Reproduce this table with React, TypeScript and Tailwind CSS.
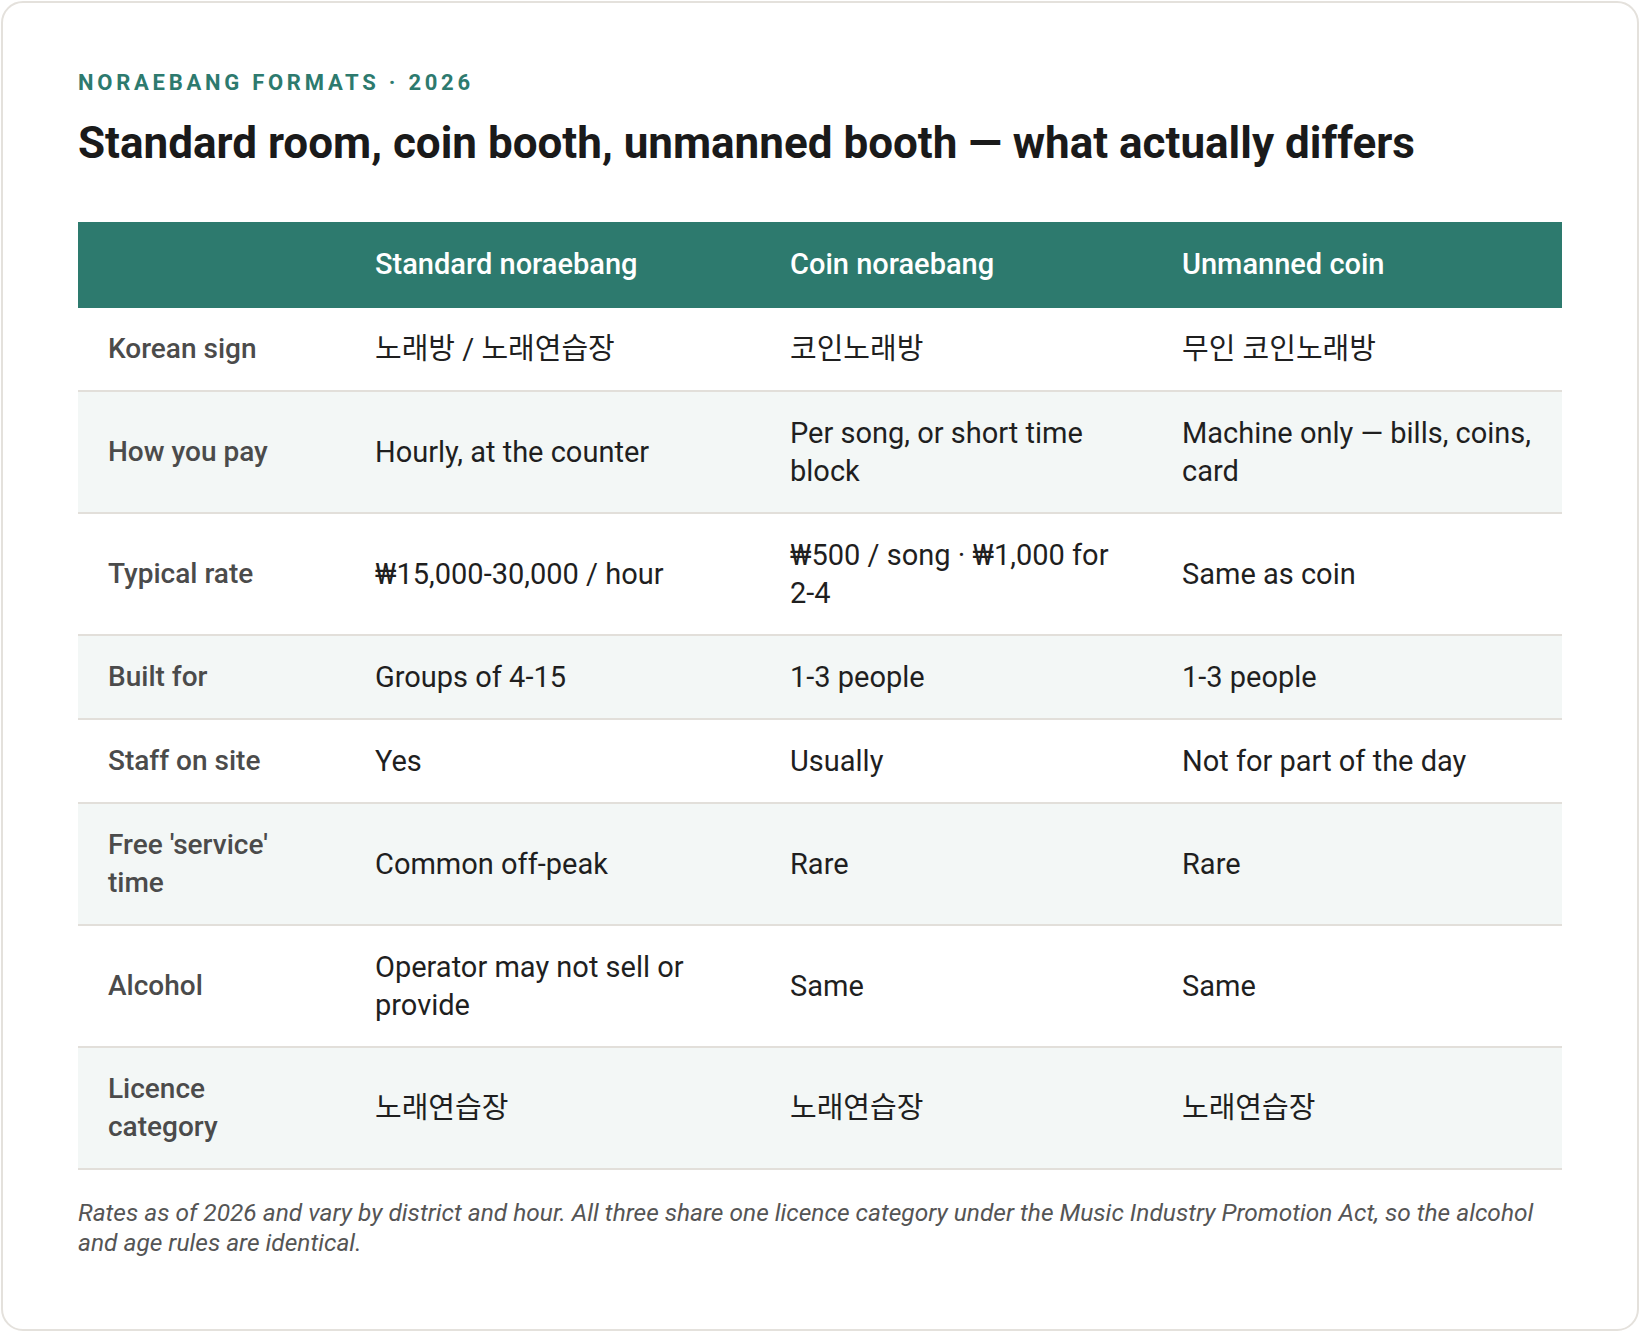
const rows: { label: string; cells: string[] }[] = [
  { label: 'Korean sign', cells: ['노래방 / 노래연습장', '코인노래방', '무인 코인노래방'] },
  { label: 'How you pay', cells: ['Hourly, at the counter', 'Per song, or short time block', 'Machine only — bills, coins, card'] },
  { label: 'Typical rate', cells: ['₩15,000-30,000 / hour', '₩500 / song · ₩1,000 for 2-4', 'Same as coin'] },
  { label: 'Built for', cells: ['Groups of 4-15', '1-3 people', '1-3 people'] },
  { label: 'Staff on site', cells: ['Yes', 'Usually', 'Not for part of the day'] },
  { label: "Free 'service' time", cells: ['Common off-peak', 'Rare', 'Rare'] },
  { label: 'Alcohol', cells: ['Operator may not sell or provide', 'Same', 'Same'] },
  { label: 'Licence category', cells: ['노래연습장', '노래연습장', '노래연습장'] },
]

export default function App() {
  return (
    <div className="min-h-screen bg-white p-px font-['Roboto','Noto_Sans_CJK_KR',sans-serif]">
      <div className="rounded-[22px] border-2 border-[#e4e1dc] bg-white px-[75px] pt-[65px] pb-[60px] min-h-[1330px]">
        <p className="text-[22px] font-bold tracking-[0.17em] text-[#2d7a6e] leading-[30px]">
          NORAEBANG FORMATS · 2026
        </p>
        <h1 className="mt-[17px] text-[44px] font-bold leading-[56px] text-[#1a1a1a]">
          Standard room, coin booth, unmanned booth — what actually differs
        </h1>

        <table className="mt-[51px] w-[1484px] table-fixed border-collapse">
          <colgroup>
            <col className="w-[267px]" />
            <col className="w-[415px]" />
            <col className="w-[392px]" />
            <col className="w-[410px]" />
          </colgroup>
          <thead>
            <tr className="bg-[#2d7a6e] text-white">
              <th className="h-[86px] px-[30px]" />
              <th className="px-[30px] text-left text-[29px] font-medium">Standard noraebang</th>
              <th className="px-[30px] text-left text-[29px] font-medium">Coin noraebang</th>
              <th className="px-[30px] text-left text-[29px] font-medium">Unmanned coin</th>
            </tr>
          </thead>
          <tbody>
            {rows.map((r, i) => (
              <tr key={r.label} className={`border-b-2 border-[#e2dfda] ${i % 2 === 1 ? 'bg-[#f3f7f6]' : 'bg-white'}`}>
                <td className="px-[30px] py-[22px] text-[28px] leading-[38px] font-medium text-[#4b4b4b] align-middle">
                  {r.label}
                </td>
                {r.cells.map((c, j) => (
                  <td key={j} className="px-[30px] py-[22px] text-[29px] leading-[38px] text-[#1f1f1f] align-middle">
                    {c}
                  </td>
                ))}
              </tr>
            ))}
          </tbody>
        </table>

        <p className="mt-[28px] text-[24.5px] italic leading-[30px] text-[#555555]">
          Rates as of 2026 and vary by district and hour. All three share one licence category under the Music Industry Promotion Act, so the alcohol and age rules are identical.
        </p>
      </div>
    </div>
  )
}
